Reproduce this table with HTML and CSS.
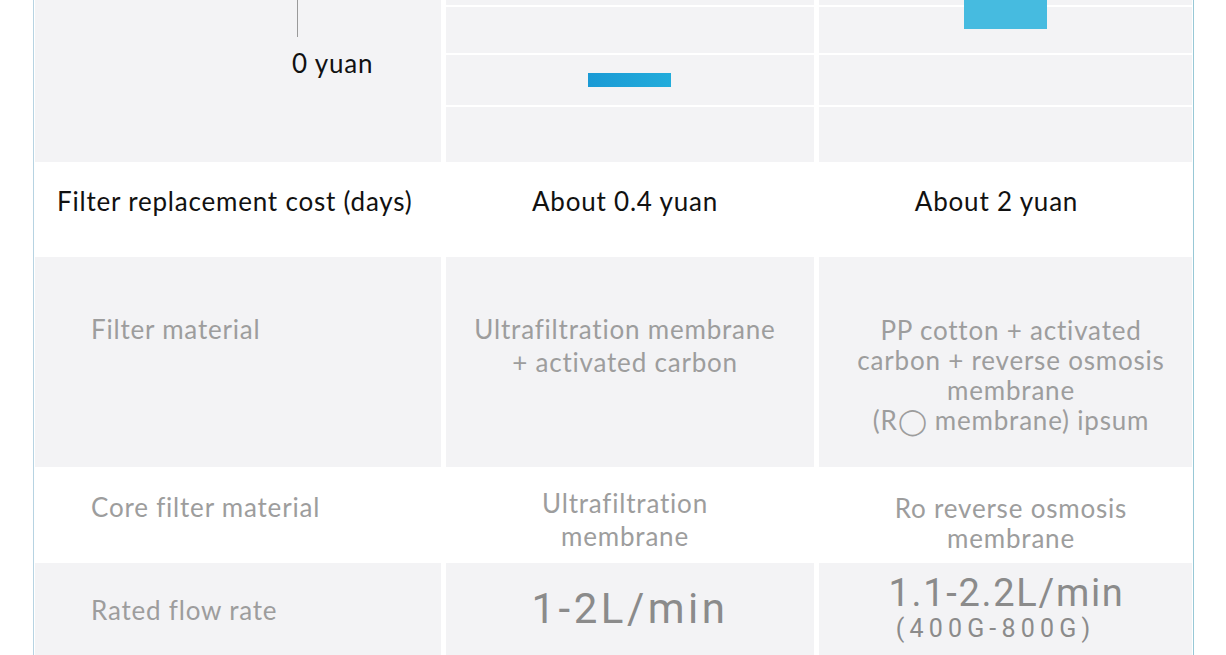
FILE: index.html
```html
<!DOCTYPE html>
<html lang="en">
<head>
<meta charset="utf-8">
<title>Filter comparison</title>
<link rel="stylesheet" href="styles.css">
</head>
<body>
<div class="table">
  <div class="row gray chart-row">
    <div class="cell axis-cell">
      <div class="axis-line"></div>
      <div class="axis-label">0 yuan</div>
    </div>
    <div class="cell chart-cell">
      <div class="band b1"></div>
      <div class="band b2"></div>
      <div class="band b3"></div>
      <div class="band b4"></div>
      <div class="bar bar-a"></div>
    </div>
    <div class="cell chart-cell">
      <div class="band b1"></div>
      <div class="band b2"></div>
      <div class="band b3"></div>
      <div class="band b4"></div>
      <div class="bar bar-b"></div>
    </div>
  </div>

  <div class="row white cost-row">
    <div class="cell label dark">Filter replacement cost (days)</div>
    <div class="cell value col2 dark">About 0.4 yuan</div>
    <div class="cell value dark">About 2 yuan</div>
  </div>

  <div class="row gray material-row">
    <div class="cell label muted indent">Filter material</div>
    <div class="cell value col2 muted lh33">Ultrafiltration membrane<br>+ activated carbon</div>
    <div class="cell value col3 muted lh30">PP cotton + activated<br>carbon + reverse osmosis<br>membrane<br>(R◯ membrane) ipsum</div>
  </div>

  <div class="row white core-row">
    <div class="cell label muted indent">Core filter material</div>
    <div class="cell value col2 muted lh33">Ultrafiltration<br>membrane</div>
    <div class="cell value col3 muted lh30">Ro reverse osmosis<br>membrane</div>
  </div>

  <div class="row gray flow-row">
    <div class="cell label muted indent">Rated flow rate</div>
    <div class="cell value big">1-2L/min</div>
    <div class="cell value big2">
      <div class="big2-main">1.1-2.2L/min</div>
      <div class="big2-sub">(400G-800G)</div>
    </div>
  </div>
</div>
</body>
</html>
```

FILE: styles.css
```css
html, body {
  margin: 0;
  padding: 0;
  background: #ffffff;
  overflow: hidden;
}

body {
  font-family: "Lato", "Open Sans", sans-serif;
  font-size: 26px;
  letter-spacing: 0.8px;
  color: #111;
}

.table {
  margin-left: 33px;
  border-left: 1px solid #b7d3e2;
  border-right: 1px solid #98c8d6;
  padding: 0 1px;
  box-sizing: content-box;
  width: 1157px;
}

.row {
  display: grid;
  grid-template-columns: 406px 368px 373px;
  column-gap: 5px;
}

.row.gray .cell {
  background: #f3f3f5;
}

.row.white .cell {
  background: #ffffff;
}

.cell {
  box-sizing: border-box;
  line-height: 28.8px;
}

/* chart row */
.chart-row { height: 162px; }

.axis-cell {
  padding-left: 257px;
}

.axis-line {
  width: 1px;
  height: 37px;
  margin-left: 5px;
  background: #9a9a9a;
}

.axis-label {
  margin-top: 12px;
  color: #111;
}

.chart-cell {
  position: relative;
  display: flex;
  flex-direction: column;
}

.band {
  border-bottom: 2px solid #ffffff;
}
.b1 { height: 5px; }
.b2 { height: 46px; }
.b3 { height: 50px; }
.b4 { flex: 1; border-bottom: none; }

.bar {
  position: absolute;
}
.bar-a {
  left: 142px;
  top: 73px;
  width: 83px;
  height: 14px;
  background: linear-gradient(90deg, #1a9ad5, #22acdb);
}
.bar-b {
  left: 145px;
  top: 0;
  width: 83px;
  height: 29px;
  background: #46bbe0;
}

/* text rows */
.label { padding-left: 22px; }
.label.indent { padding-left: 56px; }
.value { text-align: center; }
.value.col2 { padding-right: 10px; }
.value.col3 { padding-left: 11px; }

.dark { color: #111; }
.muted { color: #9d9d9d; }

.lh33 { line-height: 33px; }
.lh30 { line-height: 30px; }

.cost-row { height: 95px; }
.cost-row .cell { padding-top: 25px; }
.cost-row .value:nth-child(3) { padding-right: 18px; }

.material-row { height: 210px; }
.material-row .label { padding-top: 58px; }
.material-row .lh33 { padding-top: 56px; }
.material-row .lh30 { padding-top: 58px; }

.core-row { height: 96px; }
.core-row .label { padding-top: 26px; }
.core-row .lh33 { padding-top: 20px; }
.core-row .lh30 { padding-top: 26px; }

.flow-row { height: 92px; }
.flow-row .label { padding-top: 33px; }

.big {
  font-family: "Roboto", "Liberation Sans", sans-serif;
  font-size: 42px;
  line-height: 42px;
  letter-spacing: 3.5px;
  color: #8b8b8b;
  padding-top: 25px;
}

.big2 {
  font-family: "Roboto", "Liberation Sans", sans-serif;
  color: #8b8b8b;
  padding-top: 11px;
  padding-left: 2px;
}

.big2-main {
  font-size: 38px;
  line-height: 38px;
  letter-spacing: 1.7px;
}

.big2-sub {
  font-size: 25px;
  line-height: 27px;
  letter-spacing: 5.2px;
  margin-top: 3px;
  padding-right: 22px;
}
```
